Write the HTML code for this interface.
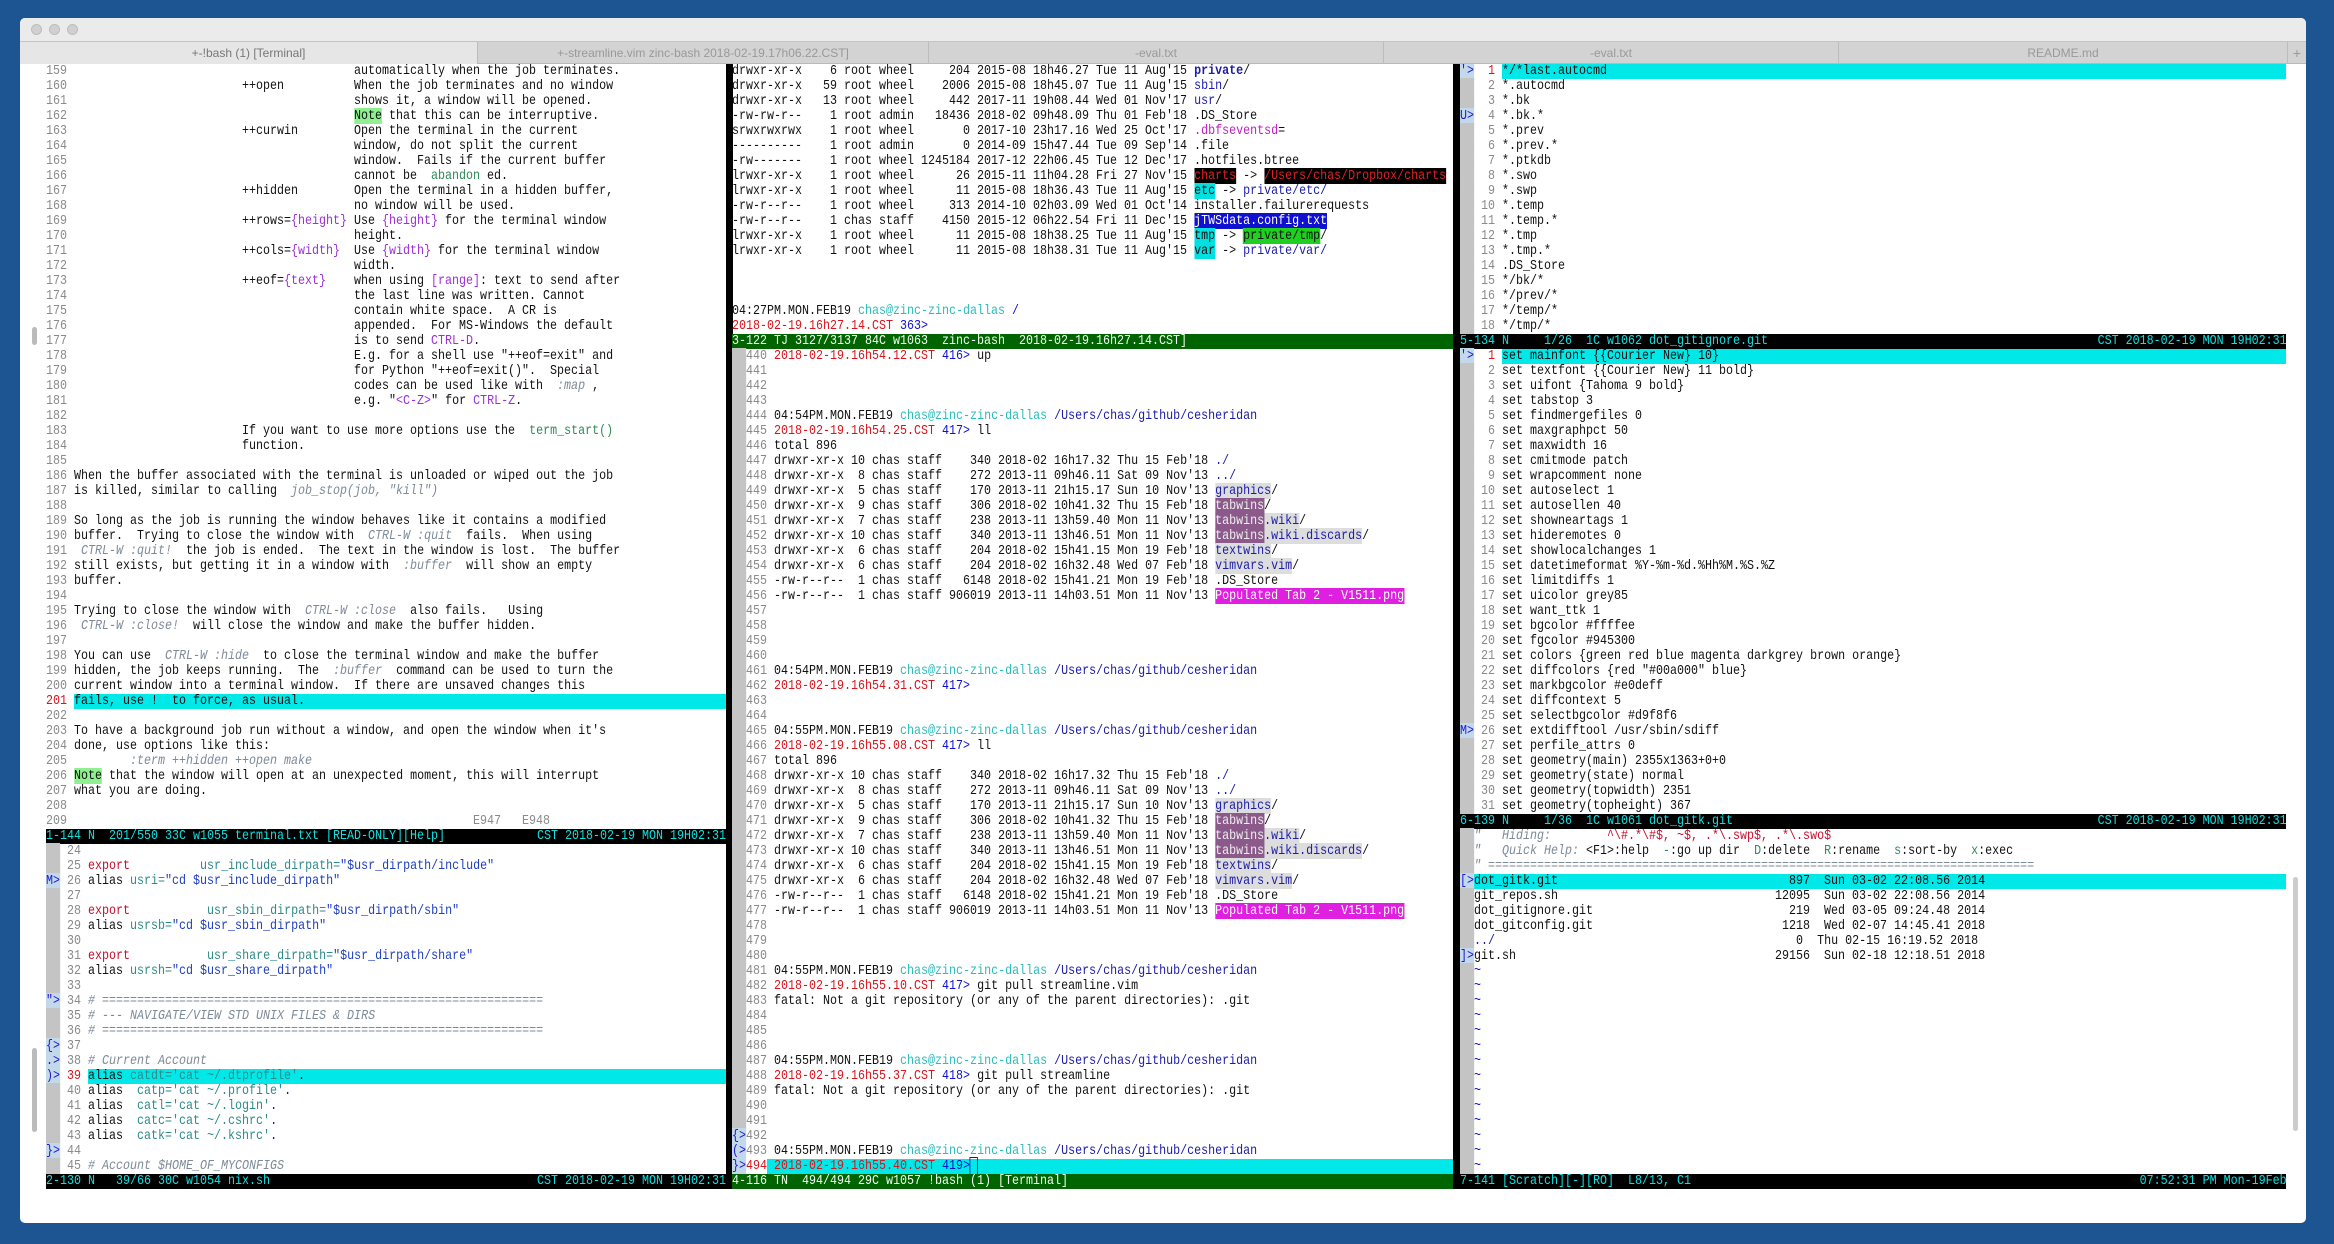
<!DOCTYPE html>
<html><head><meta charset="utf-8">
<style>
*{margin:0;padding:0;box-sizing:border-box}
body{width:2334px;height:1244px;background:#1c5591;position:relative;overflow:hidden;font-family:"Liberation Mono",monospace}
#win{position:absolute;left:20px;top:18px;width:2286px;height:1205px;background:#fff;border-radius:5px;overflow:hidden}
#tb{position:absolute;left:0;top:0;width:100%;height:23px;background:#ebebeb}
.dot{position:absolute;top:6px;width:11px;height:11px;border-radius:50%;background:#d0d0d0;border:1px solid #bdbdbd}
#tabs{position:absolute;left:0;top:23px;width:100%;height:23px;background:#d3d3d3;border-top:1px solid #c4c4c4;border-bottom:1px solid #b9b9b9}
.tab{position:absolute;top:0;height:22px;line-height:22px;text-align:center;font-family:"Liberation Sans",sans-serif;font-size:12px;color:#999;border-left:1px solid #bcbcbc}
.pane{position:absolute;top:64px;height:1125px;overflow:hidden;font-size:14px;line-height:15px}
.in{transform:scaleX(.8333);transform-origin:0 0}
.l{position:relative;height:15px;white-space:pre;color:#111}
.a{position:absolute;top:0}
.n{color:#8a8a8a}.r{color:#d8141c}.bl{color:#1010d0}.cy{color:#2cbcbc}.dr{color:#1c1ca8}
.it{font-style:italic;color:#7d8a98}.g{color:#2e8b57}.p{color:#9b30d8}
.note{background:#8ff08f}
.st{background:#000;color:#10e0e0}
.gs{background:#006400;color:#f0fff0}
.sg{background:#c4c4c4;color:#1a1ad0}
.sb{background:#c4d8ec;color:#1a1ad0}
.ex{color:#c8102e}.tl{color:#2e8b8b}.vb{color:#2040c0}
.sep{position:absolute;top:64px;height:1125px;width:7px;background:#000}
</style></head><body>
<div id="win">
 <div id="tb"><div class="dot" style="left:11px"></div><div class="dot" style="left:29px"></div><div class="dot" style="left:47px"></div></div>
 <div id="tabs">
  <div class="tab" style="left:0;width:457px;background:#e6e6e6;color:#777;border-left:none">+-!bash (1) [Terminal]</div>
  <div class="tab" style="left:457px;width:451px">+-streamline.vim zinc-bash  2018-02-19.17h06.22.CST]</div>
  <div class="tab" style="left:908px;width:455px">-eval.txt</div>
  <div class="tab" style="left:1363px;width:455px">-eval.txt</div>
  <div class="tab" style="left:1818px;width:449px">README.md</div>
  <div class="tab" style="left:2267px;width:19px;font-size:14px">+</div>
 </div>
 <div style="position:absolute;left:12px;top:309px;width:5px;height:18px;background:#bbb;border-radius:3px"></div>
 <div style="position:absolute;left:12px;top:1030px;width:5px;height:84px;background:#bbb;border-radius:3px"></div>
 <div style="position:absolute;left:2273px;top:859px;width:5px;height:254px;background:#ccc;border-radius:3px"></div>
</div>

<div class="sep" style="left:726px"></div>
<div class="sep" style="left:1453px"></div>

<!-- PANE 1 -->
<div class="pane" style="left:46px;width:680px"><div class="in" style="width:816px">
<div class="l"><span class="n">159</span><span class="a" style="left:44ch">automatically when the job terminates.</span></div>
<div class="l"><span class="n">160</span><span class="a" style="left:28ch">++open</span><span class="a" style="left:44ch">When the job terminates and no window</span></div>
<div class="l"><span class="n">161</span><span class="a" style="left:44ch">shows it, a window will be opened.</span></div>
<div class="l"><span class="n">162</span><span class="a" style="left:44ch"><span class="note">Note</span> that this can be interruptive.</span></div>
<div class="l"><span class="n">163</span><span class="a" style="left:28ch">++curwin</span><span class="a" style="left:44ch">Open the terminal in the current</span></div>
<div class="l"><span class="n">164</span><span class="a" style="left:44ch">window, do not split the current</span></div>
<div class="l"><span class="n">165</span><span class="a" style="left:44ch">window.  Fails if the current buffer</span></div>
<div class="l"><span class="n">166</span><span class="a" style="left:44ch">cannot be  <span class="g">abandon</span> ed.</span></div>
<div class="l"><span class="n">167</span><span class="a" style="left:28ch">++hidden</span><span class="a" style="left:44ch">Open the terminal in a hidden buffer,</span></div>
<div class="l"><span class="n">168</span><span class="a" style="left:44ch">no window will be used.</span></div>
<div class="l"><span class="n">169</span><span class="a" style="left:28ch">++rows=<span class="p">{height}</span></span><span class="a" style="left:44ch">Use <span class="p">{height}</span> for the terminal window</span></div>
<div class="l"><span class="n">170</span><span class="a" style="left:44ch">height.</span></div>
<div class="l"><span class="n">171</span><span class="a" style="left:28ch">++cols=<span class="p">{width}</span></span><span class="a" style="left:44ch">Use <span class="p">{width}</span> for the terminal window</span></div>
<div class="l"><span class="n">172</span><span class="a" style="left:44ch">width.</span></div>
<div class="l"><span class="n">173</span><span class="a" style="left:28ch">++eof=<span class="p">{text}</span></span><span class="a" style="left:44ch">when using <span class="p">[range]</span>: text to send after</span></div>
<div class="l"><span class="n">174</span><span class="a" style="left:44ch">the last line was written. Cannot</span></div>
<div class="l"><span class="n">175</span><span class="a" style="left:44ch">contain white space.  A CR is</span></div>
<div class="l"><span class="n">176</span><span class="a" style="left:44ch">appended.  For MS-Windows the default</span></div>
<div class="l"><span class="n">177</span><span class="a" style="left:44ch">is to send <span class="p">CTRL-D</span>.</span></div>
<div class="l"><span class="n">178</span><span class="a" style="left:44ch">E.g. for a shell use "++eof=exit" and</span></div>
<div class="l"><span class="n">179</span><span class="a" style="left:44ch">for Python "++eof=exit()".  Special</span></div>
<div class="l"><span class="n">180</span><span class="a" style="left:44ch">codes can be used like with  <span class="it">:map</span> ,</span></div>
<div class="l"><span class="n">181</span><span class="a" style="left:44ch">e.g. "<span class="p">&lt;C-Z&gt;</span>" for <span class="p">CTRL-Z</span>.</span></div>
<div class="l"><span class="n">182</span></div>
<div class="l"><span class="n">183</span><span class="a" style="left:28ch">If you want to use more options use the  <span class="g">term_start()</span></span></div>
<div class="l"><span class="n">184</span><span class="a" style="left:28ch">function.</span></div>
<div class="l"><span class="n">185</span></div>
<div class="l"><span class="n">186</span> When the buffer associated with the terminal is unloaded or wiped out the job</div>
<div class="l"><span class="n">187</span> is killed, similar to calling  <span class="it">job_stop(job, "kill")</span></div>
<div class="l"><span class="n">188</span></div>
<div class="l"><span class="n">189</span> So long as the job is running the window behaves like it contains a modified</div>
<div class="l"><span class="n">190</span> buffer.  Trying to close the window with  <span class="it">CTRL-W :quit</span>  fails.  When using</div>
<div class="l"><span class="n">191</span>  <span class="it">CTRL-W :quit!</span>  the job is ended.  The text in the window is lost.  The buffer</div>
<div class="l"><span class="n">192</span> still exists, but getting it in a window with  <span class="it">:buffer</span>  will show an empty</div>
<div class="l"><span class="n">193</span> buffer.</div>
<div class="l"><span class="n">194</span></div>
<div class="l"><span class="n">195</span> Trying to close the window with  <span class="it">CTRL-W :close</span>  also fails.   Using</div>
<div class="l"><span class="n">196</span>  <span class="it">CTRL-W :close!</span>  will close the window and make the buffer hidden.</div>
<div class="l"><span class="n">197</span></div>
<div class="l"><span class="n">198</span> You can use  <span class="it">CTRL-W :hide</span>  to close the terminal window and make the buffer</div>
<div class="l"><span class="n">199</span> hidden, the job keeps running.  The  <span class="it">:buffer</span>  command can be used to turn the</div>
<div class="l"><span class="n">200</span> current window into a terminal window.  If there are unsaved changes this</div>
<div class="l" style="background:linear-gradient(to right,transparent 4ch,#00e8e8 4ch)"><span class="r">201</span> fails, use !  to force, as usual.</div>
<div class="l"><span class="n">202</span></div>
<div class="l"><span class="n">203</span> To have a background job run without a window, and open the window when it's</div>
<div class="l"><span class="n">204</span> done, use options like this:</div>
<div class="l"><span class="n">205</span>         <span class="it">:term ++hidden ++open make</span></div>
<div class="l"><span class="n">206</span> <span class="note">Note</span> that the window will open at an unexpected moment, this will interrupt</div>
<div class="l"><span class="n">207</span> what you are doing.</div>
<div class="l"><span class="n">208</span></div>
<div class="l"><span class="n">209</span><span class="a n" style="left:61ch">E947   E948</span></div>
<div class="l st">1-144 N  201/550 33C w1055 terminal.txt [READ-ONLY][Help]<span class="a" style="right:0">CST 2018-02-19 MON 19H02:31</span></div>
<div class="l"><span class="sg">  </span><span class="n"> 24</span></div>
<div class="l"><span class="sg">  </span><span class="n"> 25</span> <span class="ex">export</span>          <span class="tl">usr_include_dirpath=</span><span class="vb">"$usr_dirpath/include"</span></div>
<div class="l"><span class="sb">M&gt;</span><span class="n"> 26</span> alias <span class="tl">usri=</span><span class="vb">"cd $usr_include_dirpath"</span></div>
<div class="l"><span class="sg">  </span><span class="n"> 27</span></div>
<div class="l"><span class="sg">  </span><span class="n"> 28</span> <span class="ex">export</span>           <span class="tl">usr_sbin_dirpath=</span><span class="vb">"$usr_dirpath/sbin"</span></div>
<div class="l"><span class="sg">  </span><span class="n"> 29</span> alias <span class="tl">usrsb=</span><span class="vb">"cd $usr_sbin_dirpath"</span></div>
<div class="l"><span class="sg">  </span><span class="n"> 30</span></div>
<div class="l"><span class="sg">  </span><span class="n"> 31</span> <span class="ex">export</span>           <span class="tl">usr_share_dirpath=</span><span class="vb">"$usr_dirpath/share"</span></div>
<div class="l"><span class="sg">  </span><span class="n"> 32</span> alias <span class="tl">usrsh=</span><span class="vb">"cd $usr_share_dirpath"</span></div>
<div class="l"><span class="sg">  </span><span class="n"> 33</span></div>
<div class="l"><span class="sb">"&gt;</span><span class="n"> 34</span> <span class="it"># ===============================================================</span></div>
<div class="l"><span class="sg">  </span><span class="n"> 35</span> <span class="it"># --- NAVIGATE/VIEW STD UNIX FILES &amp; DIRS</span></div>
<div class="l"><span class="sg">  </span><span class="n"> 36</span> <span class="it"># ===============================================================</span></div>
<div class="l"><span class="sb">{&gt;</span><span class="n"> 37</span></div>
<div class="l"><span class="sb">.&gt;</span><span class="n"> 38</span> <span class="it"># Current Account</span></div>
<div class="l" style="background:linear-gradient(to right,transparent 6ch,#00e8e8 6ch)"><span class="sb">)&gt;</span><span class="r"> 39</span> alias <span class="tl">catdt='cat ~/.dtprofile'</span>.</div>
<div class="l"><span class="sg">  </span><span class="n"> 40</span> alias  <span class="tl">catp='cat ~/.profile'</span><span class="bl">.</span></div>
<div class="l"><span class="sg">  </span><span class="n"> 41</span> alias  <span class="tl">catl='cat ~/.login'</span><span class="bl">.</span></div>
<div class="l"><span class="sg">  </span><span class="n"> 42</span> alias  <span class="tl">catc='cat ~/.cshrc'</span><span class="bl">.</span></div>
<div class="l"><span class="sg">  </span><span class="n"> 43</span> alias  <span class="tl">catk='cat ~/.kshrc'</span><span class="bl">.</span></div>
<div class="l"><span class="sb">}&gt;</span><span class="n"> 44</span></div>
<div class="l"><span class="sg">  </span><span class="n"> 45</span> <span class="it"># Account $HOME_OF_MYCONFIGS</span></div>
<div class="l st">2-130 N   39/66 30C w1054 nix.sh<span class="a" style="right:0">CST 2018-02-19 MON 19H02:31</span></div>
</div></div>

<!-- PANE 2 -->
<div class="pane" style="left:732px;width:721px"><div class="in" style="width:866px">
<div class="l">drwxr-xr-x    6 root wheel     204 2015-08 18h46.27 Tue 11 Aug'15 <b class="dr">private</b>/</div>
<div class="l">drwxr-xr-x   59 root wheel    2006 2015-08 18h45.07 Tue 11 Aug'15 <span class="dr">sbin</span>/</div>
<div class="l">drwxr-xr-x   13 root wheel     442 2017-11 19h08.44 Wed 01 Nov'17 <span class="dr">usr</span>/</div>
<div class="l">-rw-rw-r--    1 root admin   18436 2018-02 09h48.09 Thu 01 Feb'18 .DS_Store</div>
<div class="l">srwxrwxrwx    1 root wheel       0 2017-10 23h17.16 Wed 25 Oct'17 <span style="color:#c020c0">.dbfseventsd</span>=</div>
<div class="l">----------    1 root admin       0 2014-09 15h47.44 Tue 09 Sep'14 .file</div>
<div class="l">-rw-------    1 root wheel 1245184 2017-12 22h06.45 Tue 12 Dec'17 .hotfiles.btree</div>
<div class="l">lrwxr-xr-x    1 root wheel      26 2015-11 11h04.28 Fri 27 Nov'15 <span style="background:#000;color:#e02020">charts</span> -&gt; <span style="background:#000;color:#e02020">/Users/chas/Dropbox/charts</span></div>
<div class="l">lrwxr-xr-x    1 root wheel      11 2015-08 18h36.43 Tue 11 Aug'15 <span style="background:#00e0e0">etc</span> -&gt; <span class="dr">private/etc/</span></div>
<div class="l">-rw-r--r--    1 root wheel     313 2014-10 02h03.09 Wed 01 Oct'14 installer.failurerequests</div>
<div class="l">-rw-r--r--    1 chas staff    4150 2015-12 06h22.54 Fri 11 Dec'15 <span style="background:#1010d0;color:#fff">jTWSdata.config.txt</span></div>
<div class="l">lrwxr-xr-x    1 root wheel      11 2015-08 18h38.25 Tue 11 Aug'15 <span style="background:#00e0e0">tmp</span> -&gt; <span style="background:#20d020">private/tmp</span>/</div>
<div class="l">lrwxr-xr-x    1 root wheel      11 2015-08 18h38.31 Tue 11 Aug'15 <span style="background:#00e0e0">var</span> -&gt; <span class="dr">private/var/</span></div>
<div class="l"></div><div class="l"></div><div class="l"></div>
<div class="l">04:27PM.MON.FEB19 <span class="cy">chas@zinc-zinc-dallas</span> <span class="bl">/</span></div>
<div class="l"><span class="r">2018-02-19.16h27.14.CST</span> <span class="bl">363&gt;</span></div>
<div class="l gs">3-122 TJ 3127/3137 84C w1063  zinc-bash  2018-02-19.16h27.14.CST]</div>
<div class="l"><span class="sg">  </span><span class="n">440</span> <span class="r">2018-02-19.16h54.12.CST</span> <span class="bl">416&gt;</span> up</div>
<div class="l"><span class="sg">  </span><span class="n">441</span></div>
<div class="l"><span class="sg">  </span><span class="n">442</span></div>
<div class="l"><span class="sg">  </span><span class="n">443</span></div>
<div class="l"><span class="sg">  </span><span class="n">444</span> 04:54PM.MON.FEB19 <span class="cy">chas@zinc-zinc-dallas</span> <span class="dr">/Users/chas/github/cesheridan</span></div>
<div class="l"><span class="sg">  </span><span class="n">445</span> <span class="r">2018-02-19.16h54.25.CST</span> <span class="bl">417&gt;</span> ll</div>
<div class="l"><span class="sg">  </span><span class="n">446</span> total 896</div>
<div class="l"><span class="sg">  </span><span class="n">447</span> drwxr-xr-x 10 chas staff    340 2018-02 16h17.32 Thu 15 Feb'18 <span class="dr">./</span></div>
<div class="l"><span class="sg">  </span><span class="n">448</span> drwxr-xr-x  8 chas staff    272 2013-11 09h46.11 Sat 09 Nov'13 <span class="dr">../</span></div>
<div class="l"><span class="sg">  </span><span class="n">449</span> drwxr-xr-x  5 chas staff    170 2013-11 21h15.17 Sun 10 Nov'13 <span class="dr" style="background:#ddd">graphics</span>/</div>
<div class="l"><span class="sg">  </span><span class="n">450</span> drwxr-xr-x  9 chas staff    306 2018-02 10h41.32 Thu 15 Feb'18 <span style="background:#8b5a8b;color:#eee">tabwins</span>/</div>
<div class="l"><span class="sg">  </span><span class="n">451</span> drwxr-xr-x  7 chas staff    238 2013-11 13h59.40 Mon 11 Nov'13 <span style="background:#8b5a8b;color:#eee">tabwins</span><span class="dr" style="background:#ddd">.wiki</span>/</div>
<div class="l"><span class="sg">  </span><span class="n">452</span> drwxr-xr-x 10 chas staff    340 2013-11 13h46.51 Mon 11 Nov'13 <span style="background:#8b5a8b;color:#eee">tabwins</span><span class="dr" style="background:#ddd">.wiki.discards</span>/</div>
<div class="l"><span class="sg">  </span><span class="n">453</span> drwxr-xr-x  6 chas staff    204 2018-02 15h41.15 Mon 19 Feb'18 <span class="dr" style="background:#ddd">textwins</span>/</div>
<div class="l"><span class="sg">  </span><span class="n">454</span> drwxr-xr-x  6 chas staff    204 2018-02 16h32.48 Wed 07 Feb'18 <span class="dr" style="background:#ddd">vimvars.vim</span>/</div>
<div class="l"><span class="sg">  </span><span class="n">455</span> -rw-r--r--  1 chas staff   6148 2018-02 15h41.21 Mon 19 Feb'18 .DS_Store</div>
<div class="l"><span class="sg">  </span><span class="n">456</span> -rw-r--r--  1 chas staff 906019 2013-11 14h03.51 Mon 11 Nov'13 <span style="background:#e020e0;color:#fff">Populated Tab 2 - V1511.png</span></div>
<div class="l"><span class="sg">  </span><span class="n">457</span></div>
<div class="l"><span class="sg">  </span><span class="n">458</span></div>
<div class="l"><span class="sg">  </span><span class="n">459</span></div>
<div class="l"><span class="sg">  </span><span class="n">460</span></div>
<div class="l"><span class="sg">  </span><span class="n">461</span> 04:54PM.MON.FEB19 <span class="cy">chas@zinc-zinc-dallas</span> <span class="dr">/Users/chas/github/cesheridan</span></div>
<div class="l"><span class="sg">  </span><span class="n">462</span> <span class="r">2018-02-19.16h54.31.CST</span> <span class="bl">417&gt;</span></div>
<div class="l"><span class="sg">  </span><span class="n">463</span></div>
<div class="l"><span class="sg">  </span><span class="n">464</span></div>
<div class="l"><span class="sg">  </span><span class="n">465</span> 04:55PM.MON.FEB19 <span class="cy">chas@zinc-zinc-dallas</span> <span class="dr">/Users/chas/github/cesheridan</span></div>
<div class="l"><span class="sg">  </span><span class="n">466</span> <span class="r">2018-02-19.16h55.08.CST</span> <span class="bl">417&gt;</span> ll</div>
<div class="l"><span class="sg">  </span><span class="n">467</span> total 896</div>
<div class="l"><span class="sg">  </span><span class="n">468</span> drwxr-xr-x 10 chas staff    340 2018-02 16h17.32 Thu 15 Feb'18 <span class="dr">./</span></div>
<div class="l"><span class="sg">  </span><span class="n">469</span> drwxr-xr-x  8 chas staff    272 2013-11 09h46.11 Sat 09 Nov'13 <span class="dr">../</span></div>
<div class="l"><span class="sg">  </span><span class="n">470</span> drwxr-xr-x  5 chas staff    170 2013-11 21h15.17 Sun 10 Nov'13 <span class="dr" style="background:#ddd">graphics</span>/</div>
<div class="l"><span class="sg">  </span><span class="n">471</span> drwxr-xr-x  9 chas staff    306 2018-02 10h41.32 Thu 15 Feb'18 <span style="background:#8b5a8b;color:#eee">tabwins</span>/</div>
<div class="l"><span class="sg">  </span><span class="n">472</span> drwxr-xr-x  7 chas staff    238 2013-11 13h59.40 Mon 11 Nov'13 <span style="background:#8b5a8b;color:#eee">tabwins</span><span class="dr" style="background:#ddd">.wiki</span>/</div>
<div class="l"><span class="sg">  </span><span class="n">473</span> drwxr-xr-x 10 chas staff    340 2013-11 13h46.51 Mon 11 Nov'13 <span style="background:#8b5a8b;color:#eee">tabwins</span><span class="dr" style="background:#ddd">.wiki.discards</span>/</div>
<div class="l"><span class="sg">  </span><span class="n">474</span> drwxr-xr-x  6 chas staff    204 2018-02 15h41.15 Mon 19 Feb'18 <span class="dr" style="background:#ddd">textwins</span>/</div>
<div class="l"><span class="sg">  </span><span class="n">475</span> drwxr-xr-x  6 chas staff    204 2018-02 16h32.48 Wed 07 Feb'18 <span class="dr" style="background:#ddd">vimvars.vim</span>/</div>
<div class="l"><span class="sg">  </span><span class="n">476</span> -rw-r--r--  1 chas staff   6148 2018-02 15h41.21 Mon 19 Feb'18 .DS_Store</div>
<div class="l"><span class="sg">  </span><span class="n">477</span> -rw-r--r--  1 chas staff 906019 2013-11 14h03.51 Mon 11 Nov'13 <span style="background:#e020e0;color:#fff">Populated Tab 2 - V1511.png</span></div>
<div class="l"><span class="sg">  </span><span class="n">478</span></div>
<div class="l"><span class="sg">  </span><span class="n">479</span></div>
<div class="l"><span class="sg">  </span><span class="n">480</span></div>
<div class="l"><span class="sg">  </span><span class="n">481</span> 04:55PM.MON.FEB19 <span class="cy">chas@zinc-zinc-dallas</span> <span class="dr">/Users/chas/github/cesheridan</span></div>
<div class="l"><span class="sg">  </span><span class="n">482</span> <span class="r">2018-02-19.16h55.10.CST</span> <span class="bl">417&gt;</span> git pull streamline.vim</div>
<div class="l"><span class="sg">  </span><span class="n">483</span> fatal: Not a git repository (or any of the parent directories): .git</div>
<div class="l"><span class="sg">  </span><span class="n">484</span></div>
<div class="l"><span class="sg">  </span><span class="n">485</span></div>
<div class="l"><span class="sg">  </span><span class="n">486</span></div>
<div class="l"><span class="sg">  </span><span class="n">487</span> 04:55PM.MON.FEB19 <span class="cy">chas@zinc-zinc-dallas</span> <span class="dr">/Users/chas/github/cesheridan</span></div>
<div class="l"><span class="sg">  </span><span class="n">488</span> <span class="r">2018-02-19.16h55.37.CST</span> <span class="bl">418&gt;</span> git pull streamline</div>
<div class="l"><span class="sg">  </span><span class="n">489</span> fatal: Not a git repository (or any of the parent directories): .git</div>
<div class="l"><span class="sg">  </span><span class="n">490</span></div>
<div class="l"><span class="sg">  </span><span class="n">491</span></div>
<div class="l"><span class="sb">{&gt;</span><span class="n">492</span></div>
<div class="l"><span class="sb">(&gt;</span><span class="n">493</span> 04:55PM.MON.FEB19 <span class="cy">chas@zinc-zinc-dallas</span> <span class="dr">/Users/chas/github/cesheridan</span></div>
<div class="l" style="background:linear-gradient(to right,transparent 5ch,#00e8e8 5ch)"><span class="sb">}&gt;</span><span class="r">494</span> <span class="r">2018-02-19.16h55.40.CST</span> <span class="bl">419&gt;</span><span style="outline:1px solid #1010d0"> </span></div>
<div class="l gs">4-116 TN  494/494 29C w1057 !bash (1) [Terminal]</div>
</div></div>

<!-- PANE 3 -->
<div class="pane" style="left:1460px;width:826px"><div class="in" style="width:992px">
<div class="l" style="background:linear-gradient(to right,transparent 6ch,#00e8e8 6ch)"><span class="sb">'&gt;</span><span class="r">  1</span> */*last.autocmd</div>
<div class="l"><span class="sg">  </span><span class="n">  2</span> *.autocmd</div>
<div class="l"><span class="sg">  </span><span class="n">  3</span> *.bk</div>
<div class="l"><span class="sb">U&gt;</span><span class="n">  4</span> *.bk.*</div>
<div class="l"><span class="sg">  </span><span class="n">  5</span> *.prev</div>
<div class="l"><span class="sg">  </span><span class="n">  6</span> *.prev.*</div>
<div class="l"><span class="sg">  </span><span class="n">  7</span> *.ptkdb</div>
<div class="l"><span class="sg">  </span><span class="n">  8</span> *.swo</div>
<div class="l"><span class="sg">  </span><span class="n">  9</span> *.swp</div>
<div class="l"><span class="sg">  </span><span class="n"> 10</span> *.temp</div>
<div class="l"><span class="sg">  </span><span class="n"> 11</span> *.temp.*</div>
<div class="l"><span class="sg">  </span><span class="n"> 12</span> *.tmp</div>
<div class="l"><span class="sg">  </span><span class="n"> 13</span> *.tmp.*</div>
<div class="l"><span class="sg">  </span><span class="n"> 14</span> .DS_Store</div>
<div class="l"><span class="sg">  </span><span class="n"> 15</span> */bk/*</div>
<div class="l"><span class="sg">  </span><span class="n"> 16</span> */prev/*</div>
<div class="l"><span class="sg">  </span><span class="n"> 17</span> */temp/*</div>
<div class="l"><span class="sg">  </span><span class="n"> 18</span> */tmp/*</div>
<div class="l st">5-134 N     1/26  1C w1062 dot_gitignore.git<span class="a" style="right:0">CST 2018-02-19 MON 19H02:31</span></div>
<div class="l" style="background:linear-gradient(to right,transparent 6ch,#00e8e8 6ch)"><span class="sb">'&gt;</span><span class="r">  1</span> set mainfont {{Courier New} 10}</div>
<div class="l"><span class="sg">  </span><span class="n">  2</span> set textfont {{Courier New} 11 bold}</div>
<div class="l"><span class="sg">  </span><span class="n">  3</span> set uifont {Tahoma 9 bold}</div>
<div class="l"><span class="sg">  </span><span class="n">  4</span> set tabstop 3</div>
<div class="l"><span class="sg">  </span><span class="n">  5</span> set findmergefiles 0</div>
<div class="l"><span class="sg">  </span><span class="n">  6</span> set maxgraphpct 50</div>
<div class="l"><span class="sg">  </span><span class="n">  7</span> set maxwidth 16</div>
<div class="l"><span class="sg">  </span><span class="n">  8</span> set cmitmode patch</div>
<div class="l"><span class="sg">  </span><span class="n">  9</span> set wrapcomment none</div>
<div class="l"><span class="sg">  </span><span class="n"> 10</span> set autoselect 1</div>
<div class="l"><span class="sg">  </span><span class="n"> 11</span> set autosellen 40</div>
<div class="l"><span class="sg">  </span><span class="n"> 12</span> set showneartags 1</div>
<div class="l"><span class="sg">  </span><span class="n"> 13</span> set hideremotes 0</div>
<div class="l"><span class="sg">  </span><span class="n"> 14</span> set showlocalchanges 1</div>
<div class="l"><span class="sg">  </span><span class="n"> 15</span> set datetimeformat %Y-%m-%d.%Hh%M.%S.%Z</div>
<div class="l"><span class="sg">  </span><span class="n"> 16</span> set limitdiffs 1</div>
<div class="l"><span class="sg">  </span><span class="n"> 17</span> set uicolor grey85</div>
<div class="l"><span class="sg">  </span><span class="n"> 18</span> set want_ttk 1</div>
<div class="l"><span class="sg">  </span><span class="n"> 19</span> set bgcolor #ffffee</div>
<div class="l"><span class="sg">  </span><span class="n"> 20</span> set fgcolor #945300</div>
<div class="l"><span class="sg">  </span><span class="n"> 21</span> set colors {green red blue magenta darkgrey brown orange}</div>
<div class="l"><span class="sg">  </span><span class="n"> 22</span> set diffcolors {red "#00a000" blue}</div>
<div class="l"><span class="sg">  </span><span class="n"> 23</span> set markbgcolor #e0deff</div>
<div class="l"><span class="sg">  </span><span class="n"> 24</span> set diffcontext 5</div>
<div class="l"><span class="sg">  </span><span class="n"> 25</span> set selectbgcolor #d9f8f6</div>
<div class="l"><span class="sb">M&gt;</span><span class="n"> 26</span> set extdifftool /usr/sbin/sdiff</div>
<div class="l"><span class="sg">  </span><span class="n"> 27</span> set perfile_attrs 0</div>
<div class="l"><span class="sg">  </span><span class="n"> 28</span> set geometry(main) 2355x1363+0+0</div>
<div class="l"><span class="sg">  </span><span class="n"> 29</span> set geometry(state) normal</div>
<div class="l"><span class="sg">  </span><span class="n"> 30</span> set geometry(topwidth) 2351</div>
<div class="l"><span class="sg">  </span><span class="n"> 31</span> set geometry(topheight) 367</div>
<div class="l st">6-139 N     1/36  1C w1061 dot_gitk.git<span class="a" style="right:0">CST 2018-02-19 MON 19H02:31</span></div>
<div class="l"><span class="sg">  </span><span class="it">"   Hiding:        <span style="color:#c8102e;font-style:normal">^\#.*\#$, ~$, .*\.swp$, .*\.swo$</span></span></div>
<div class="l"><span class="sg">  </span><span class="it">"   Quick Help: </span>&lt;F1&gt;:help  <span class="g">-</span>:go up dir  <span class="g">D</span>:delete  <span class="g">R</span>:rename  <span class="g">s</span>:sort-by  <span class="g">x</span>:exec</div>
<div class="l"><span class="sg">  </span><span class="it">" ==============================================================================</span></div>
<div class="l" style="background:linear-gradient(to right,transparent 2ch,#00e8e8 2ch)"><span class="sb">[&gt;</span>dot_gitk.git                                 897  Sun 03-02 22:08.56 2014</div>
<div class="l"><span class="sg">  </span>git_repos.sh                               12095  Sun 03-02 22:08.56 2014</div>
<div class="l"><span class="sg">  </span>dot_gitignore.git                            219  Wed 03-05 09:24.48 2014</div>
<div class="l"><span class="sg">  </span>dot_gitconfig.git                           1218  Wed 02-07 14:45.41 2018</div>
<div class="l"><span class="sg">  </span><span class="dr">../</span>                                           0  Thu 02-15 16:19.52 2018</div>
<div class="l"><span class="sb">]&gt;</span>git.sh                                     29156  Sun 02-18 12:18.51 2018</div>
<div class="l"><span class="sg">  </span><span class="bl">~</span></div>
<div class="l"><span class="sg">  </span><span class="bl">~</span></div>
<div class="l"><span class="sg">  </span><span class="bl">~</span></div>
<div class="l"><span class="sg">  </span><span class="bl">~</span></div>
<div class="l"><span class="sg">  </span><span class="bl">~</span></div>
<div class="l"><span class="sg">  </span><span class="bl">~</span></div>
<div class="l"><span class="sg">  </span><span class="bl">~</span></div>
<div class="l"><span class="sg">  </span><span class="bl">~</span></div>
<div class="l"><span class="sg">  </span><span class="bl">~</span></div>
<div class="l"><span class="sg">  </span><span class="bl">~</span></div>
<div class="l"><span class="sg">  </span><span class="bl">~</span></div>
<div class="l"><span class="sg">  </span><span class="bl">~</span></div>
<div class="l"><span class="sg">  </span><span class="bl">~</span></div>
<div class="l"><span class="sg">  </span><span class="bl">~</span></div>
<div class="l st">7-141 [Scratch][-][RO]  L8/13, C1<span class="a" style="right:0">07:52:31 PM Mon-19Feb</span></div>
</div></div>
</body></html>
